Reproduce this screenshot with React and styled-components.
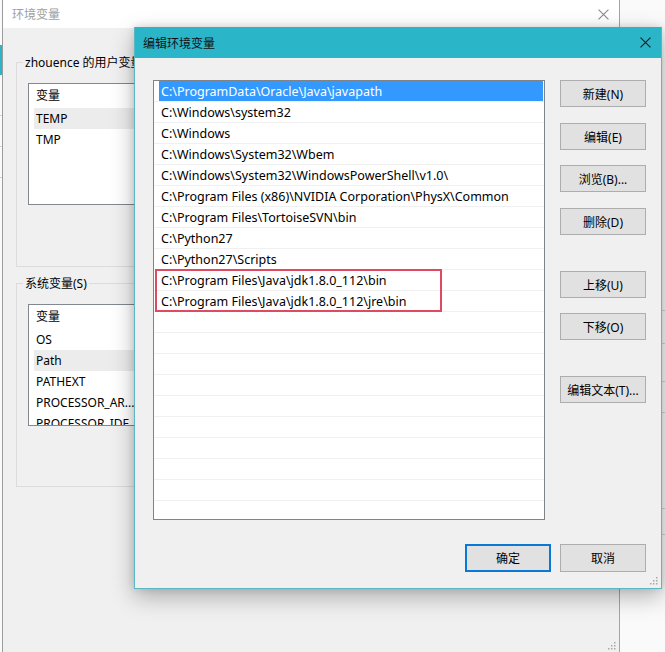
import styled, { createGlobalStyle } from 'styled-components';

const GlobalStyle = createGlobalStyle`
  html, body {
    margin: 0;
    padding: 0;
  }
  body {
    width: 665px;
    height: 652px;
    overflow: hidden;
    background: #f6f6f6;
    font-family: "Noto Sans", "Noto Sans CJK SC", sans-serif;
    font-size: 12px;
    color: #000;
  }
`;

const Desktop = styled.div`
  position: relative;
  width: 665px;
  height: 652px;
  overflow: hidden;
  background: #f7f7f7;
`;

// window far left / far right, only slivers are visible
const SideWindow = styled.div`
  position: absolute;
  top: 0;
  bottom: 0;
  left: ${(p) => p.left}px;
  width: ${(p) => p.width}px;
  background: #fafafa;
  display: flex;
  flex-direction: column;
`;

const SideLine = styled.div`
  height: ${(p) => p.h || 1}px;
  margin-top: ${(p) => p.mt}px;
  background: ${(p) => p.color || '#d4d4d4'};
`;

const BackWindow = styled.div`
  position: absolute;
  left: 2px;
  top: 0;
  width: 618px;
  height: 652px;
  box-sizing: border-box;
  background: #f0f0f0;
  border-left: 1px solid #9c9c9c;
  border-right: 1px solid #a4a4a4;
  display: flex;
  flex-direction: column;
`;

const BackTitle = styled.div`
  height: 28px;
  flex-shrink: 0;
  background: #fff;
  display: flex;
  align-items: center;
  justify-content: space-between;
  padding: 0 10px 0 9px;
  color: #a0a0a0;
  font-size: 12px;
`;

const BackBody = styled.div`
  padding: 26px 12px 0 13px;
  display: flex;
  flex-direction: column;
`;

const Group = styled.fieldset`
  margin: ${(p) => p.mt || 0}px 0 0 0;
  padding: ${(p) => p.pt}px 11px ${(p) => p.pb}px 11px;
  border: 1px solid #dcdcdc;
  min-width: 0;
`;

const GroupLabel = styled.legend`
  margin-left: -5px;
  padding: 0 2px;
  line-height: 17px;
  font-size: 12px;
`;

const VarList = styled.div`
  width: 290px;
  height: 122px;
  box-sizing: border-box;
  border: 1px solid #828790;
  background: #fff;
  overflow: hidden;
`;

const VarHeader = styled.div`
  height: 24px;
  line-height: 24px;
  padding-left: 7px;
`;

const VarRow = styled.div`
  height: 21px;
  line-height: 21px;
  margin-left: 5px;
  padding-left: 2px;
  background: ${(p) => (p.hover ? '#ececec' : 'transparent')};
  white-space: nowrap;
`;

const Grip = styled.svg`
  position: absolute;
  right: ${(p) => p.right}px;
  bottom: ${(p) => p.bottom}px;
`;

const Dialog = styled.div`
  position: absolute;
  left: 134px;
  top: 27px;
  width: 528px;
  height: 562px;
  box-sizing: border-box;
  background: #f0f0f0;
  border: 1px solid #5cb6c6;
  border-top: none;
  box-shadow: 0 8px 22px rgba(0, 0, 0, 0.28), 0 0 8px rgba(0, 0, 0, 0.12);
  display: flex;
  flex-direction: column;
`;

const TitleBar = styled.div`
  height: 31px;
  flex-shrink: 0;
  background: #2bb5c8;
  display: flex;
  align-items: center;
  justify-content: space-between;
  padding-left: 8px;
`;

const TitleText = styled.span`
  font-size: 12px;
  color: #111;
`;

const CloseBtn = styled.div`
  width: 32px;
  height: 31px;
  display: flex;
  align-items: center;
  justify-content: center;
`;

const DialogBody = styled.div`
  flex: 1;
  padding: 22px 15px 16px 18px;
  display: flex;
  flex-direction: column;
`;

const MainRow = styled.div`
  display: flex;
  gap: 15px;
`;

const PathList = styled.div`
  position: relative;
  width: 392px;
  height: 440px;
  box-sizing: border-box;
  border: 1px solid #7f8489;
  background: #fff;
  overflow: hidden;
`;

const PathRow = styled.div`
  height: 21px;
  box-sizing: border-box;
  border-bottom: 1px solid #f0f0f0;
`;

const PathCell = styled.div`
  height: 20px;
  box-sizing: border-box;
  padding: 1px 0 0 2px;
  line-height: 20px;
  margin: 0 1px 0 5px;
  font-size: 12.5px;
  background: ${(p) => (p.selected ? '#3399ff' : 'transparent')};
  color: ${(p) => (p.selected ? '#fff' : '#000')};
  white-space: nowrap;
`;

const Highlight = styled.div`
  position: absolute;
  left: 1px;
  top: 188px;
  width: 287px;
  height: 43px;
  box-sizing: border-box;
  border: 2px solid #df4a62;
`;

const ButtonColumn = styled.div`
  width: 86px;
  display: flex;
  flex-direction: column;
`;

const Button = styled.div`
  width: 86px;
  height: ${(p) => p.h || 27}px;
  margin-top: ${(p) => p.mt || 0}px;
  box-sizing: border-box;
  background: #e1e1e1;
  border: ${(p) => (p.primary ? '2px solid #0a78d4' : '1px solid #adadad')};
  display: flex;
  align-items: center;
  justify-content: center;
  font-size: 12px;
  color: #000;
`;

const Footer = styled.div`
  margin-top: 24px;
  display: flex;
  justify-content: flex-end;
  gap: 9px;
`;

const paths = [
  'C:\\ProgramData\\Oracle\\Java\\javapath',
  'C:\\Windows\\system32',
  'C:\\Windows',
  'C:\\Windows\\System32\\Wbem',
  'C:\\Windows\\System32\\WindowsPowerShell\\v1.0\\',
  'C:\\Program Files (x86)\\NVIDIA Corporation\\PhysX\\Common',
  'C:\\Program Files\\TortoiseSVN\\bin',
  'C:\\Python27',
  'C:\\Python27\\Scripts',
  'C:\\Program Files\\Java\\jdk1.8.0_112\\bin',
  'C:\\Program Files\\Java\\jdk1.8.0_112\\jre\\bin',
];

const rows = [...paths, ...Array(10).fill('')];

const sideButtons = [
  ['新建(N)', 0],
  ['编辑(E)', 16],
  ['浏览(B)...', 15],
  ['删除(D)', 16],
  ['上移(U)', 36],
  ['下移(O)', 15],
  ['编辑文本(T)...', 36],
];

const CloseIcon = ({ color, size }) => (
  <svg width={size} height={size} viewBox="0 0 10 10">
    <path d="M0.5 0.5 L9.5 9.5 M9.5 0.5 L0.5 9.5" stroke={color} strokeWidth="1" fill="none" />
  </svg>
);

const GripIcon = ({ right, bottom }) => (
  <Grip right={right} bottom={bottom} width="10" height="10" viewBox="0 0 10 10">
    {[[8, 2], [8, 5], [5, 5], [8, 8], [5, 8], [2, 8]].map(([x, y]) => (
      <rect key={`${x}-${y}`} x={x} y={y} width="1.5" height="1.5" fill="#a8a8a8" />
    ))}
  </Grip>
);

const App = () => {
  return (
    <>
      <GlobalStyle />
      <Desktop>
        <SideWindow left={0} width={4}>
          <SideLine mt={45} h={30} color="#2bb5c8" />
          <SideLine mt={40} />
          <SideLine mt={30} />
          <SideLine mt={30} />
        </SideWindow>
        <SideWindow left={620} width={45}>
          <SideLine mt={310} />
          <SideLine mt={32} />
          <SideLine mt={37} />
          <SideLine mt={30} />
          <SideLine mt={95} />
          <SideLine mt={25} />
        </SideWindow>

        <BackWindow>
          <BackTitle>
            <span>环境变量</span>
            <CloseIcon color="#8a8a8a" size={11} />
          </BackTitle>
          <BackBody>
            <Group pt={12} pb={61}>
              <GroupLabel>zhouence 的用户变量(U)</GroupLabel>
              <VarList>
                <VarHeader>变量</VarHeader>
                <VarRow hover>TEMP</VarRow>
                <VarRow>TMP</VarRow>
              </VarList>
            </Group>
            <Group mt={8} pt={12} pb={60}>
              <GroupLabel>系统变量(S)</GroupLabel>
              <VarList>
                <VarHeader>变量</VarHeader>
                <VarRow>OS</VarRow>
                <VarRow hover>Path</VarRow>
                <VarRow>PATHEXT</VarRow>
                <VarRow>PROCESSOR_AR...</VarRow>
                <VarRow>PROCESSOR_IDE</VarRow>
              </VarList>
            </Group>
          </BackBody>
          <GripIcon right={3} bottom={2} />
        </BackWindow>

        <Dialog>
          <TitleBar>
            <TitleText>编辑环境变量</TitleText>
            <CloseBtn>
              <CloseIcon color="#1a1a1a" size={11} />
            </CloseBtn>
          </TitleBar>
          <DialogBody>
            <MainRow>
              <PathList>
                {rows.map((p, i) => (
                  <PathRow key={i}>
                    <PathCell selected={i === 0}>{p}</PathCell>
                  </PathRow>
                ))}
                <Highlight />
              </PathList>
              <ButtonColumn>
                {sideButtons.map(([label, mt]) => (
                  <Button key={label} mt={mt}>
                    {label}
                  </Button>
                ))}
              </ButtonColumn>
            </MainRow>
            <Footer>
              <Button primary h={28}>确定</Button>
              <Button h={28}>取消</Button>
            </Footer>
          </DialogBody>
          <GripIcon right={3} bottom={3} />
        </Dialog>
      </Desktop>
    </>
  );
};

export default App;
